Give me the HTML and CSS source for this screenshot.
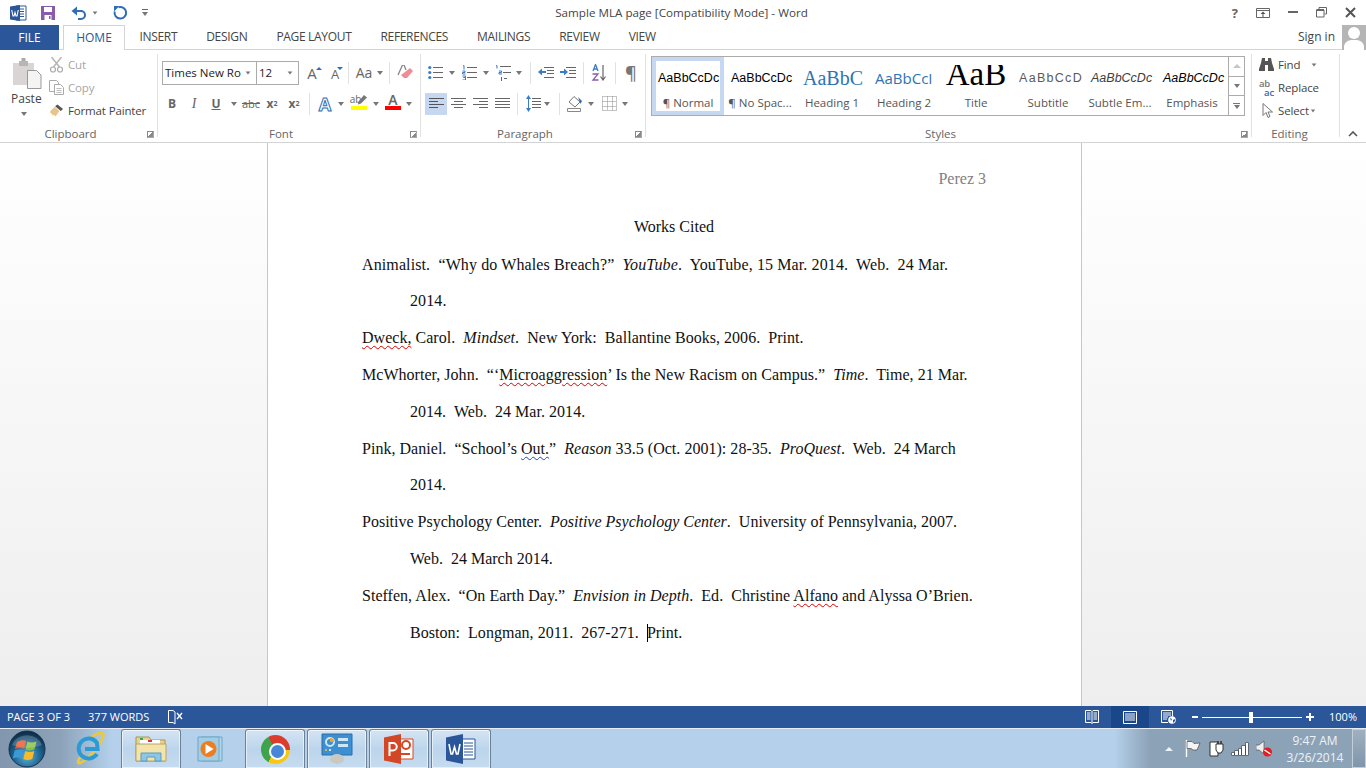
FILE: index.html
```html
<!doctype html>
<html lang="en">
<head>
	<meta charset="UTF-8">
	<title>Sample MLA page [Compatibility Mode] - Word</title>
	<link rel="stylesheet" href="styles.css">
</head>
<body>
	<div class="titlebar">
		<div class="qat">
			<svg class="qat-word" width="18" height="18" viewBox="0 0 18 18"><path d="M7 2h10v14H7z" fill="#fff" stroke="#2b579a"/><path d="M10 5h5M10 7.500h5M10 10h5M10 12.500h5" stroke="#2b579a"/><path d="M1 2.500 11 1v16L1 15.500z" fill="#2b579a"/><path d="M2.700 6 4 12h1l1-3.500L7 12h1l1.300-6" fill="none" stroke="#fff" stroke-width="1.100"/></svg>
			<svg class="qat-save" width="16" height="16" viewBox="0 0 16 16"><path d="M1 1h14v14H1z" fill="#8a5bab"/><path d="M4 2h8v5H4z" fill="#fff"/><path d="M4.500 10h7v5h-7z" fill="#fff"/><path d="M9 11h1.500v3H9z" fill="#8a5bab"/></svg>
			<svg class="qat-undo" width="16" height="14" viewBox="0 0 16 14"><path d="M3 5h7a4 4 0 0 1 0 8H7" fill="none" stroke="#2f6db5" stroke-width="2"/><path d="M6 0.500v9L0.500 5z" fill="#2f6db5"/></svg>
			<i class="caret qat-caret"></i>
			<svg class="qat-redo" width="15" height="15" viewBox="0 0 15 15"><path d="M5.500 2.300A5.800 5.800 0 1 1 1.700 6.500" fill="none" stroke="#2f6db5" stroke-width="2"/><path d="M1 1h5.500L1 6.500z" fill="#2f6db5"/></svg>
			<div class="qat-more"><b></b><i class="caret"></i></div>
		</div>
		<div class="doc-title">Sample MLA page [Compatibility Mode] - Word</div>
		<div class="win-buttons">
			<span class="help">?</span>
			<svg width="14" height="10" viewBox="0 0 14 10"><path d="M.5.500h13v9H.500zM.5 2.500h13" fill="none" stroke="#666"/><path d="M7 3.500 4.500 6h5zM6.500 6h1v3h-1z" fill="#555"/></svg>
			<svg width="10" height="3" viewBox="0 0 10 3"><path d="M0 0h10v2H0z" fill="#666"/></svg>
			<svg width="11" height="11" viewBox="0 0 11 11"><path d="M3 2V.500h7.500v6.500H8.500M.5 3h7.500v7H.5z" fill="none" stroke="#666"/><path d="M.5 3h7.500" stroke="#666" stroke-width="2"/></svg>
			<svg width="11" height="11" viewBox="0 0 11 11"><path d="M1 1l9 9M10 1l-9 9" stroke="#555" stroke-width="2"/></svg>
		</div>
	</div>

	<div class="tabs">
		<div class="tab-file">FILE</div>
		<div class="tab tab-home">HOME</div>
		<div class="tab">INSERT</div>
		<div class="tab">DESIGN</div>
		<div class="tab">PAGE LAYOUT</div>
		<div class="tab">REFERENCES</div>
		<div class="tab">MAILINGS</div>
		<div class="tab">REVIEW</div>
		<div class="tab">VIEW</div>
		<div class="signin">Sign in</div>
		<div class="avatar"><svg width="24" height="25" viewBox="0 0 24 25"><circle cx="12" cy="8" r="6" fill="#fff"/><path d="M2 25v-4q1-5 7-6h6q6 1 7 6v4z" fill="#fff"/></svg></div>
	</div>

	<div class="ribbon">
		<section class="group g-clipboard">
			<div class="group-body clip-body">
				<div class="paste">
					<svg width="30" height="31" viewBox="0 0 30 31"><path d="M1 5h21v22H1z" fill="#d9d5d5"/><path d="M7 3h9v5H7z" fill="#b9b5b5"/><path d="M9.500 0h4v3h-4z" fill="#aaa"/><path d="M15.500 12.500h9l4.500 4.500v13.500H15.500z" fill="#f4f4f4" stroke="#999"/></svg>
					<span>Paste</span>
					<i class="caret"></i>
				</div>
				<div class="clip-list">
					<div class="clip-item off"><svg width="14" height="16" viewBox="0 0 14 16"><path d="M2 0l8 10M12 0 4 10" stroke="#b5b5b5" stroke-width="1.500"/><circle cx="3.500" cy="12.500" r="2.500" fill="none" stroke="#aaa" stroke-width="1.200"/><circle cx="10.500" cy="12.500" r="2.500" fill="none" stroke="#aaa" stroke-width="1.200"/></svg>Cut</div>
					<div class="clip-item off"><svg width="15" height="15" viewBox="0 0 15 15"><path d="M.5.500h7l2 2v9h-9z" fill="#fff" stroke="#aaa"/><path d="M5.500 4.500h6l3 3v7h-9z" fill="#fff" stroke="#aaa"/><path d="M7.500 8.500h5M7.500 10.500h5M7.500 12.500h5" stroke="#bbb"/></svg>Copy</div>
					<div class="clip-item"><svg width="16" height="15" viewBox="0 0 16 15"><path d="M9 1l6 5-2.500 2-6-5z" fill="#555"/><path d="M6 3.500 11 8l-4 6-2-2-1 1-1-2-2-1 1-1-1-.5z" fill="#e9c489"/></svg>Format Painter</div>
				</div>
			</div>
			<div class="group-foot"><span></span><span>Clipboard</span><i class="launcher"></i></div>
		</section>

		<section class="group g-font">
			<div class="group-body">
				<div class="row row-top">
					<div class="combo combo-name"><span>Times New Ro</span><i class="caret"></i></div>
					<div class="combo combo-size"><span>12</span><i class="caret"></i></div>
					<div class="tool w-26"><span class="grow-a">A</span><i class="tri-up"></i></div>
					<div class="tool w-20"><span class="shrink-a">A</span><i class="tri-down"></i></div>
					<i class="sep sep-a"></i>
					<div class="tool w-24"><span class="aa">Aa</span></div>
					<div class="tool w-8"><i class="caret"></i></div>
					<i class="sep sep-b"></i>
					<div class="tool w-22">
						<svg width="16" height="15" viewBox="0 0 16 15"><path d="M8 7l5-4 3 3-6 7H7l-3-3z" fill="#ef8c98"/><path d="M1 10 5.500 0h1.500l2 5" fill="none" stroke="#888" stroke-width="1.300"/></svg>
					</div>
				</div>
				<div class="row">
					<div class="tool w-22 bold">B</div>
					<div class="tool w-22 ital">I</div>
					<div class="tool w-22 under">U</div>
					<div class="tool w-14"><i class="caret"></i></div>
					<div class="tool w-20 strike">abc</div>
					<div class="tool w-22 bold">x<sub>2</sub></div>
					<div class="tool w-22 bold">x<sup>2</sup></div>
					<i class="sep"></i>
					<div class="tool w-22 effect">A</div>
					<div class="tool w-10"><i class="caret"></i></div>
					<div class="tool w-26 marker"><span>ab</span><svg class="pen" width="10" height="10" viewBox="0 0 10 10"><path d="M7 0l3 2.500-6 6-3 1 .5-3z" fill="#777"/></svg><b></b></div>
					<div class="tool w-8"><i class="caret"></i></div>
					<div class="tool w-26 colour"><span>A</span><b></b></div>
					<div class="tool w-6"><i class="caret"></i></div>
				</div>
			</div>
			<div class="group-foot"><span></span><span>Font</span><i class="launcher"></i></div>
		</section>

		<section class="group g-para">
			<div class="group-body">
				<div class="row row-top para-top">
					<div class="tool w-22"><svg width="15" height="15" viewBox="0 0 15 15"><path d="M5 2.500h10M5 7.500h10M5 12.500h10" stroke="#666"/><circle cx="1.800" cy="2.500" r="1.600" fill="#3a7dc4"/><circle cx="1.800" cy="7.500" r="1.600" fill="#3a7dc4"/><circle cx="1.800" cy="12.500" r="1.600" fill="#3a7dc4"/></svg></div>
					<div class="tool w-12"><i class="caret"></i></div>
					<div class="tool w-22"><svg width="15" height="15" viewBox="0 0 15 15"><path d="M5 2.500h10M5 7.500h10M5 12.500h10" stroke="#666"/><path d="M1 1l1-.5v4M0.500 6h2.500v1.500h-2.500v1.500h3M.5 11h3v1.500h-2 2V15h-3" fill="none" stroke="#3a7dc4"/></svg></div>
					<div class="tool w-12"><i class="caret"></i></div>
					<div class="tool w-22"><svg width="16" height="16" viewBox="0 0 16 16"><path d="M5 1.500h11M8 7.500h8M9 13.500h3" stroke="#666"/><path d="M1 1l1-.5v3M4 6h2.500v1.500H4V9h3" fill="none" stroke="#3a7dc4"/><path d="M6 12h1v4H6z" fill="#666"/></svg></div>
					<div class="tool w-10"><i class="caret"></i></div>
					<i class="sep sep-c"></i>
					<div class="tool w-22"><svg width="16" height="12" viewBox="0 0 16 12"><path d="M6 .500h10M9 3.500h7M9 6.500h7M6 10.500h10" stroke="#666"/><path d="M0 5l4-3.500V4h4v2H4v2.500z" fill="#3a7dc4"/></svg></div>
					<div class="tool w-22"><svg width="16" height="12" viewBox="0 0 16 12"><path d="M6 .500h10M9 3.500h7M9 6.500h7M6 10.500h10" stroke="#666"/><path d="M8 5 4 1.500V4H0v2h4v2.500z" fill="#3a7dc4"/></svg></div>
					<i class="sep"></i>
					<div class="tool w-22"><svg width="16" height="17" viewBox="0 0 16 17"><path d="M2 7 4.500.500 7 7M3 5h3" fill="none" stroke="#3a7dc4" stroke-width="1.300"/><path d="M1.500 10H7L2 16h5.500" fill="none" stroke="#8a5bab" stroke-width="1.300"/><path d="M12 1v14M9.500 12.500 12 16l2.500-3.500" fill="none" stroke="#666" stroke-width="1.200"/></svg></div>
					<i class="sep sep-d"></i>
					<div class="tool w-22 pilcrow">¶</div>
				</div>
				<div class="row para-row">
					<div class="tool w-22 active"><svg width="15" height="11" viewBox="0 0 15 11"><path d="M0 .5h15M0 3.500h9M0 6.500h15M0 9.500h9" stroke="#555"/></svg></div>
					<div class="tool w-22"><svg width="15" height="11" viewBox="0 0 15 11"><path d="M0 .5h15M3 3.500h9M0 6.500h15M3 9.500h9" stroke="#666"/></svg></div>
					<div class="tool w-22"><svg width="15" height="11" viewBox="0 0 15 11"><path d="M0 .5h15M6 3.500h9M0 6.500h15M6 9.500h9" stroke="#666"/></svg></div>
					<div class="tool w-22"><svg width="15" height="11" viewBox="0 0 15 11"><path d="M0 .5h15M0 3.500h15M0 6.500h15M0 9.500h15" stroke="#666"/></svg></div>
					<i class="sep sep-e"></i>
					<div class="tool w-20"><svg width="15" height="17" viewBox="0 0 15 17"><path d="M6 3.500h9M6 6.500h9M6 9.500h9M6 12.500h9" stroke="#666"/><path d="M2.500 3v11" stroke="#3a7dc4"/><path d="M2.500 0 5 4H0zM2.500 17 5 13H0z" fill="#3a7dc4"/></svg></div>
					<div class="tool w-8"><i class="caret"></i></div>
					<i class="sep sep-f"></i>
					<div class="tool w-22"><svg width="16" height="16" viewBox="0 0 16 16"><path d="M7 .500 13 6l-5 5-6-5z" fill="#fff" stroke="#777"/><path d="M11 1l4 4-1.500 3z" fill="#2f6db5"/><path d="M.5 12.500h13v3H.500z" fill="#fff" stroke="#888"/></svg></div>
					<div class="tool w-10"><i class="caret"></i></div>
					<div class="tool w-22 borders"><svg width="15" height="15" viewBox="0 0 15 15"><path d="M.5.500h14v14H.500zM5.500.500v14M10.500.500v14M.5 5.500h14M.5 10.500h14" fill="none" stroke="#888" stroke-dasharray="1 1"/></svg></div>
					<div class="tool w-10"><i class="caret"></i></div>
				</div>
			</div>
			<div class="group-foot"><span></span><span>Paragraph</span><i class="launcher"></i></div>
		</section>

		<section class="group g-styles">
			<div class="group-body">
				<div class="gallery">
					<div class="style-item selected"><div class="prev">AaBbCcDc</div><div class="name">¶ Normal</div></div>
					<div class="style-item"><div class="prev">AaBbCcDc</div><div class="name">¶ No Spac...</div></div>
					<div class="style-item"><div class="prev prev-h1">AaBbC</div><div class="name">Heading 1</div></div>
					<div class="style-item"><div class="prev prev-h2">AaBbCcI</div><div class="name">Heading 2</div></div>
					<div class="style-item"><div class="prev prev-title">AaB</div><div class="name">Title</div></div>
					<div class="style-item"><div class="prev prev-sub">AaBbCcD</div><div class="name">Subtitle</div></div>
					<div class="style-item"><div class="prev prev-em">AaBbCcDc</div><div class="name">Subtle Em...</div></div>
					<div class="style-item"><div class="prev prev-em2">AaBbCcDc</div><div class="name">Emphasis</div></div>
					<div class="gallery-scroll">
						<div><i class="tri-up tri-grey"></i></div>
						<div><i class="caret"></i></div>
						<div class="scroll-more"><b></b><i class="caret"></i></div>
					</div>
				</div>
			</div>
			<div class="group-foot"><span></span><span>Styles</span><i class="launcher"></i></div>
		</section>

		<section class="group g-edit">
			<div class="group-body edit-body">
				<div class="edit-item"><svg width="15" height="13" viewBox="0 0 15 13"><path d="M3 0h3v3h3V0h3l1 5 2 6v2H9V7H6v6H0v-2l2-6z" fill="#555"/></svg><span>Find</span><i class="caret find-caret"></i></div>
				<div class="edit-item"><span class="abac"><em>ab</em><em>ac</em></span><span>Replace</span></div>
				<div class="edit-item item-select"><svg width="12" height="16" viewBox="0 0 12 16"><path d="M1 .500v12l3-3 2 5 2-1-2-4.500h4.500z" fill="#fff" stroke="#777"/></svg><span>Select</span><i class="caret"></i></div>
			</div>
			<div class="group-foot foot-plain"><span>Editing</span></div>
		</section>

		<div class="collapse"><svg width="10" height="6" viewBox="0 0 10 6"><path d="M1 5l4-4 4 4" fill="none" stroke="#555" stroke-width="1.600"/></svg></div>
	</div>

	<div class="workspace">
		<div class="page">
			<div class="running-head">Perez 3</div>
			<div class="works-cited">Works Cited</div>
			<p class="entry wide">Animalist.  “Why do Whales Breach?”  <em>YouTube</em>.  YouTube, 15 Mar. 2014.  Web.  24 Mar.<br>2014.</p>
			<p class="entry"><span class="spell">Dweck,</span> Carol.  <em>Mindset</em>.  New York:  Ballantine Books, 2006.  Print.</p>
			<p class="entry">McWhorter, John.  “‘<span class="spell">Microaggression</span>’ Is the New Racism on Campus.”  <em>Time</em>.  Time, 21 Mar.<br>2014.  Web.  24 Mar. 2014.</p>
			<p class="entry">Pink, Daniel.  “School’s <span class="grammar">Out.</span>”  <em>Reason</em> 33.5 (Oct. 2001): 28-35.  <em>ProQuest</em>.  Web.  24 March<br>2014.</p>
			<p class="entry snug">Positive Psychology Center.  <em>Positive Psychology Center</em>.  University of Pennsylvania, 2007.<br>Web.  24 March 2014.</p>
			<p class="entry">Steffen, Alex.  “On Earth Day.”  <em>Envision in Depth</em>.  Ed.  Christine <span class="spell">Alfano</span> and Alyssa O’Brien.<br>Boston:  Longman, 2011.  267-271.  <i class="text-cursor"></i>Print.</p>
		</div>
	</div>

	<div class="statusbar">
		<span class="stat stat-page">PAGE 3 OF 3</span>
		<span class="stat stat-words">377 WORDS</span>
		<svg class="stat-book" width="15" height="15" viewBox="0 0 15 15"><path d="M7 2 5 .5H.5v12H5l2 1.500M7 2v12" fill="none" stroke="#fff"/><path d="M9 3l5 6M14 3 9 9" stroke="#fff" stroke-width="1.300"/></svg>
		<div class="view-buttons">
			<div class="view-btn"><svg width="14" height="14" viewBox="0 0 14 14"><path d="M.5.500H6L7 1.500 8 .5h5.500v12H8L7 13.500 6 12.500H.5zM7 1.500v12M2 3h3.500M2 5h3.500M2 7h3.500M2 9h3.500M8.500 3H12M8.500 5H12M8.500 7H12M8.500 9H12" fill="none" stroke="#fff"/></svg></div>
			<div class="view-btn on"><svg width="14" height="13" viewBox="0 0 14 13"><path d="M.5.500h13v12H.500zM2 3h10M2 5h10M2 7h10M2 9h10" fill="none" stroke="#fff"/></svg></div>
			<div class="view-btn"><svg width="15" height="14" viewBox="0 0 15 14"><path d="M7 12.500H.5V.5h11v6M2 3h8M2 5h8M2 7h5M2 9h4" fill="none" stroke="#fff"/><circle cx="11" cy="10" r="3.800" fill="#fff"/><path d="M9 8l2 1-1 2zM12 10l2-1v2l-2 2z" fill="#2b579a"/></svg></div>
		</div>
		<div class="zoom-bar">
			<i class="zoom-minus"></i>
			<div class="slider"><b></b></div>
			<i class="zoom-plus"></i>
		</div>
		<span class="stat stat-zoom">100%</span>
	</div>

	<div class="taskbar">
		<svg class="orb" width="38" height="38" viewBox="0 0 38 38">
			<defs>
				<radialGradient id="orbfill" cx="50%" cy="70%" r="65%"><stop offset="0" stop-color="#5fb4d8"/><stop offset=".6" stop-color="#1c5f8e"/><stop offset="1" stop-color="#0e2f4a"/></radialGradient>
			</defs>
			<circle cx="19" cy="19" r="18" fill="url(#orbfill)" stroke="#17324a"/>
			<path d="M9 12q5-3 9-1l-2 8q-4-2-9 0z" fill="#e8562a"/>
			<path d="M19.500 11.500q4 2 9 0l-2 8q-5 2-9 0z" fill="#86c03e"/>
			<path d="M6.700 20.500q5-2 9 0l-2 8q-4-2-9 0z" fill="#3a9ad8"/>
			<path d="M17.300 21q4 2 9 0l-2 8q-5 2-9 0z" fill="#f4bc2c"/>
			<path d="M4 15a15.500 13 0 0 1 30 0q-15 6-30 0z" fill="#fff" opacity=".2"/>
		</svg>
		<div class="task-plain task-ie"><svg width="31" height="33" viewBox="0 0 31 33"><path d="M8 21c-6 8-6 11-3 10 3-1 13-8 20-20 4-7 5-10 1-10-3 0-7 2-10 4" fill="none" stroke="#f0c832" stroke-width="2.500"/><path d="M22 22a10 10 0 1 1 0-11l.5 6H10" fill="none" stroke="#2d9ad8" stroke-width="4"/></svg></div>
		<div class="task-btn task-first"><svg width="32" height="29" viewBox="0 0 32 29"><path d="M1 2h13l2 3h14v21H1z" fill="#e8d38c" stroke="#a89458"/><path d="M5 5h20v6H5z" fill="#fff"/><path d="M5 3h3v2H5z" fill="#3aa847"/><path d="M13 5h4v2h-4z" fill="#d23a2a"/><path d="M1 9h30v17H1z" fill="#f3e4ac" stroke="#b8a468"/><path d="M6 26V18h20v8h-6v-4h-8v4z" fill="#8cc8e6" stroke="#5a9cc0"/></svg></div>
		<div class="task-plain task-wmp"><svg width="30" height="26" viewBox="0 0 30 26"><path d="M4 1h21v24H4z" fill="#b3d4e6" stroke="#6fa8c8"/><path d="M1 1h21v24H1z" fill="#a3cde2" stroke="#6fa8c8"/><circle cx="11.500" cy="13" r="8" fill="#ee7d22"/><path d="M8.500 8l8 5-8 5z" fill="#fff"/></svg></div>
		<div class="task-btn task-chrome"><i class="chrome"></i></div>
		<div class="task-btn"><svg width="32" height="32" viewBox="0 0 32 32"><path d="M1 1h30v21H1z" fill="#3c8fd0" stroke="#2a6da8"/><circle cx="9" cy="9" r="4" fill="none" stroke="#cfe6f6" stroke-width="2"/><path d="M9 5a4 4 0 0 1 4 4H9z" fill="#f0a030"/><path d="M17 5h10v3H17zM17 11h10v3H17z" fill="#cfe6f6"/><circle cx="5" cy="17" r="1" fill="#f0c040"/><circle cx="9" cy="17" r="1" fill="#fff"/><ellipse cx="16" cy="26" rx="7" ry="5" fill="#c9c9c3"/></svg></div>
		<div class="task-btn"><svg width="30" height="30" viewBox="0 0 30 30"><path d="M12 5h17v20H12z" fill="#fff" stroke="#d24726"/><circle cx="22" cy="11" r="4" fill="none" stroke="#d24726" stroke-width="2"/><path d="M16 19h10v2H16z" fill="#d24726"/><path d="M0 3.500 17 0v30L0 26.500z" fill="#d24726"/><path d="M5.500 22V9h3.500a3 3 0 0 1 0 7.500H5.500" fill="none" stroke="#fff" stroke-width="2"/></svg></div>
		<div class="task-btn"><svg width="30" height="30" viewBox="0 0 30 30"><path d="M12 5h17v20H12z" fill="#fff" stroke="#2b579a"/><path d="M18 9h9M18 12h9M18 15h9M18 18h9M18 21h9" stroke="#2b579a"/><path d="M0 3.500 17 0v30L0 26.500z" fill="#2b579a"/><path d="M3 10l2 10h1.500L8.500 13l2 7H12l2-10" fill="none" stroke="#fff" stroke-width="1.600"/></svg></div>
		<div class="tray">
			<i class="tray-up"></i>
			<svg width="16" height="17" viewBox="0 0 16 17"><path d="M1.500 0v17" stroke="#fff" stroke-width="1.400"/><path d="M2 1.500h5l2 2 6-.5-3 7H8L6 8.500H2z" fill="#f4f4f4" stroke="#333" stroke-width=".6"/></svg>
			<svg width="15" height="17" viewBox="0 0 15 17"><path d="M1 2h8v14H1z" fill="#fff" stroke="#333"/><path d="M7 4h7v6l-2 3H9l-2-3z" fill="#fff" stroke="#333"/><path d="M9 1v3M12 1v3" stroke="#333" stroke-width="1.500"/></svg>
			<div class="bars"><b></b><b></b><b></b><b></b><b></b></div>
			<svg width="16" height="17" viewBox="0 0 16 17"><path d="M0 5h3l5-4v13L3 10H0z" fill="#eee" stroke="#444" stroke-width=".6"/><circle cx="11.500" cy="12" r="4.500" fill="#e31b23"/><path d="M8.500 10l6 4" stroke="#fff" stroke-width="1.500"/></svg>
			<div class="clock"><div>9:47 AM</div><div>3/26/2014</div></div>
		</div>
		<div class="show-desktop"></div>
	</div>
</body>
</html>
```

FILE: styles.css
```css
*{
	box-sizing:border-box;
}
html,body{
	margin:0;
	padding:0;
	height:100%;
	overflow:hidden;
}
body{
	width:1366px;
	height:768px;
	display:flex;
	flex-direction:column;
	font-family:"Open Sans","Noto Sans",sans-serif;
	font-size:12px;
	color:#444;
	background:#fff;
}
i{
	font-style:normal;
}

/* small shared bits */
.caret{
	display:inline-block;
	width:0;
	height:0;
	border-left:3.5px solid transparent;
	border-right:3.5px solid transparent;
	border-top:4px solid #777;
}
.tri-up{
	width:0;
	height:0;
	border-left:3px solid transparent;
	border-right:3px solid transparent;
	border-bottom:3px solid #2f6db5;
}
.tri-down{
	width:0;
	height:0;
	border-left:3px solid transparent;
	border-right:3px solid transparent;
	border-top:3px solid #2f6db5;
}
.tri-grey{
	display:inline-block;
	border-left-width:4px;
	border-right-width:4px;
	border-bottom:4px solid #c6c6c6;
}

/* title bar */
.titlebar{
	height:25px;
	flex:none;
	display:grid;
	grid-template-columns:1fr auto 1fr;
	align-items:center;
}
.qat{
	display:flex;
	align-items:center;
	padding-left:9px;
}
.qat-save{
	margin-left:13px;
}
.qat-undo{
	margin-left:15px;
}
.qat-caret{
	margin-left:5px;
	transform:scale(.8);
}
.qat-redo{
	margin-left:15px;
}
.qat-more{
	margin-left:14px;
	display:flex;
	flex-direction:column;
	align-items:center;
	gap:2px;
}
.qat-more b{
	width:6px;
	height:1px;
	background:#666;
}
.doc-title{
	margin-left:-3px;
	font-size:11.650px;
	color:#444;
}
.win-buttons{
	display:flex;
	align-items:center;
	justify-content:flex-end;
	gap:18px;
	padding-right:10px;
}
.help{
	font-weight:700;
	font-size:13px;
	color:#666;
}

/* tabs */
.tabs{
	height:25px;
	flex:none;
	display:flex;
	align-items:stretch;
	border-bottom:1px solid #d4d4d4;
}
.tab-file{
	width:59px;
	background:#2b579a;
	color:#fff;
	text-align:center;
	line-height:25px;
	margin-bottom:-1px;
	margin-right:4px;
}
.tab{
	padding:0 14.500px;
	line-height:24px;
	color:#444;
	letter-spacing:-.32px;
}
.tab-home{
	width:62px;
	padding:0;
	text-align:center;
	color:#2b579a;
	background:#fff;
	border:1px solid #d4d4d4;
	border-bottom:0;
	margin-bottom:-1px;
	line-height:24px;
	letter-spacing:0;
}
.signin{
	margin-left:auto;
	margin-right:7px;
	line-height:24px;
}
.avatar{
	width:24px;
	height:25px;
	background:#b5b5b5;
	overflow:hidden;
}

/* ribbon */
.ribbon{
	height:93px;
	flex:none;
	display:flex;
	border-bottom:1px solid #d4d4d4;
	padding-top:4px;
}
.group{
	position:relative;
	height:83px;
	border-right:1px solid #e1e1e1;
	display:flex;
	flex-direction:column;
}
.group-body{
	height:72px;
	flex:none;
}
.group-foot{
	height:16px;
	flex:none;
	display:grid;
	grid-template-columns:1fr auto 1fr;
	align-items:center;
	color:#666;
	font-size:11.500px;
	line-height:16px;
	padding-right:16px;
}
.foot-plain{
	display:block;
	text-align:center;
	padding-right:12px;
}
.launcher{
	justify-self:end;
	margin-right:-13px;
	width:7px;
	height:7px;
	border-top:1px solid #888;
	border-left:1px solid #888;
	border-bottom:1px solid #aaa;
	border-right:1px solid #aaa;
	background:linear-gradient(135deg,transparent 50%,#888 50%);
}
.g-clipboard{
	width:158px;
}
.g-font{
	width:263px;
	padding-left:3px;
}
.g-font .group-foot{
	margin-left:-3px;
}
.g-para{
	width:225px;
	padding-left:3px;
}
.g-para .group-foot{
	margin-left:-3px;
}
.g-styles{
	width:606px;
	padding-left:5px;
}
.g-styles .group-foot{
	margin-left:-5px;
}
.g-edit{
	width:88px;
}
.collapse{
	flex:1;
	display:flex;
	align-items:flex-end;
	justify-content:center;
	padding-bottom:5px;
}

.row{
	display:flex;
	align-items:center;
	height:23px;
	margin-top:8px;
}
.row-top{
	margin-top:7px;
}
.tool{
	position:relative;
	flex:none;
	height:22px;
	display:flex;
	align-items:center;
	justify-content:center;
	color:#666;
}
.w-6{width:6px;}
.w-8{width:8px;}
.w-10{width:10px;}
.w-12{width:12px;}
.w-14{width:14px;}
.w-20{width:20px;}
.w-22{width:22px;}
.w-24{width:24px;}
.w-26{width:26px;}
.sep{
	flex:none;
	width:1px;
	height:22px;
	margin:0 4px;
	background:#e1e1e1;
}
.sep-a{margin:0 3px 0 3px;}
.sep-b{margin:0 4px 0 5px;}
.sep-c{margin:0 4px 0 6px;}
.sep-d{margin:0 4px 0 5px;}
.sep-e{margin:0 5px 0 4px;}
.sep-f{margin:0 4px 0 8px;}

/* clipboard */
.clip-body{
	display:flex;
}
.paste{
	width:49px;
	padding-top:4px;
	padding-left:12px;
	display:flex;
	flex-direction:column;
	color:#444;
}
.paste span{
	margin-left:-1px;
	margin-top:1px;
	line-height:18px;
}
.paste .caret{
	margin:4px 0 0 9px;
}
.clip-list{
	margin-top:-1px;
	font-size:11.500px;
	letter-spacing:-.15px;
}
.clip-item{
	height:23px;
	display:flex;
	align-items:center;
	gap:4px;
	color:#444;
}
.clip-item svg{
	flex:none;
	width:15px;
}
.clip-item.off{
	color:#a6a6a6;
}

/* font */
.combo{
	height:24px;
	flex:none;
	display:flex;
	align-items:center;
	justify-content:space-between;
	border:1px solid #ababab;
	padding:0 5px 0 2px;
	font-size:11.500px;
	color:#222;
}
.combo-name{
	width:95px;
	margin-left:1px;
}
.combo-size{
	width:43px;
	margin-left:-1px;
}
.combo .caret{
	transform:scale(.8);
}
.grow-a{
	font-size:15px;
	color:#666;
}
.shrink-a{
	font-size:13px;
	color:#666;
	margin-top:2px;
}
.tool .tri-up{
	position:absolute;
	top:5px;
	right:3px;
}
.tool .tri-down{
	position:absolute;
	top:5px;
	right:2px;
}
.aa{
	font-size:14px;
	color:#666;
}
.bold{
	font-weight:700;
	font-size:12px;
}
.bold sub,.bold sup{
	font-size:7px;
	color:#2f6db5;
	line-height:0;
}
.bold sup{
	color:#666;
}
.ital{
	font-family:"Liberation Serif",serif;
	font-style:italic;
	font-size:14px;
}
.under{
	font-weight:700;
	text-decoration:underline;
}
.strike{
	font-size:11px;
	text-decoration:line-through;
}
.effect{
	font-weight:700;
	font-size:18px;
	color:#fff;
	-webkit-text-stroke:1px #2f6db5;
}
.marker,.colour{
	flex-direction:column;
	justify-content:flex-start;
	line-height:13px;
}
.marker span{
	font-size:10px;
	margin-right:7px;
	color:#666;
}
.pen{
	position:absolute;
	top:2px;
	right:5px;
}
.colour span{
	font-size:14px;
	font-weight:600;
}
.marker b,.colour b{
	width:16px;
	height:4px;
	background:#ffff00;
}
.colour b{
	background:#ff0000;
}

/* paragraph */
.para-top .tool{
	height:23px;
}
.pilcrow{
	font-size:18px;
	font-weight:600;
	color:#777;
}
.para-row{
	margin-left:1px;
}
.tool.active{
	background:#c5d7f1;
}
.borders{
	margin-left:2px;
}

/* styles gallery */
.gallery{
	height:60px;
	margin-top:2px;
	width:594px;
	display:flex;
	border:1px solid #ababab;
}
.style-item{
	width:72px;
	flex:none;
	overflow:hidden;
	text-align:center;
	padding-top:2px;
	border:0;
}
.style-item.selected{
	width:72px;
	border:4px solid #c5d7f1;
	padding-top:0;
}
.prev{
	height:37px;
	line-height:39px;
	padding:0 7px;
	overflow:hidden;
	white-space:nowrap;
	font-family:"Liberation Sans",sans-serif;
	font-size:12.500px;
	color:#000;
	text-align:left;
}
.selected .prev{
	height:35px;
	line-height:35px;
	padding:0 2px;
}
.name{
	font-size:11.500px;
	color:#555;
	white-space:nowrap;
	line-height:14px;
}
.prev-h1{
	font-family:"Liberation Serif",serif;
	font-size:20px;
	color:#2e74b5;
}
.prev-h2{
	font-family:"Open Sans",sans-serif;
	font-size:15px;
	color:#2e74b5;
}
.prev-title{
	font-family:"Liberation Serif",serif;
	font-size:33px;
	line-height:18px;
	height:21px;
	margin-top:6px;
	margin-bottom:10px;
	padding:0;
	text-align:center;
}
.prev-sub{
	color:#5a5a5a;
	letter-spacing:1.300px;
}
.prev-em{
	font-style:italic;
	color:#404040;
}
.prev-em2{
	font-style:italic;
}
.gallery-scroll{
	flex:1;
	display:flex;
	flex-direction:column;
	border-left:1px solid #ababab;
}
.gallery-scroll div{
	flex:1;
	display:flex;
	flex-direction:column;
	align-items:center;
	justify-content:center;
	border-bottom:1px solid #ababab;
}
.gallery-scroll div:last-child{
	border-bottom:0;
}
.scroll-more{
	gap:1px;
}
.scroll-more b{
	width:7px;
	height:1px;
	background:#777;
}

/* editing */
.edit-body{
	margin-top:-1px;
	margin-bottom:1px;
	padding-left:7px;
	font-size:11.500px;
	letter-spacing:-.15px;
}
.edit-item{
	height:23px;
	display:flex;
	align-items:center;
	gap:4px;
	color:#444;
}
.find-caret{
	margin-left:7px;
	transform:scale(.8);
}
.abac{
	display:flex;
	flex-direction:column;
	width:15px;
	font-size:9.500px;
	line-height:9px;
	font-weight:600;
}
.abac em{
	font-style:normal;
	color:#777;
}
.abac em + em{
	color:#2f6db5;
	text-align:right;
}
.item-select{
	padding-left:3px;
	gap:4px;
}
.item-select .caret{
	margin-left:-3px;
	transform:scale(.7);
}

/* document */
.workspace{
	flex:1;
	min-height:0;
	display:flex;
	justify-content:center;
	overflow:hidden;
	padding-right:17px;
	background:linear-gradient(#fff,#eee);
}
.page{
	width:815px;
	flex:none;
	background:#fff;
	border-left:1px solid #c6c6c6;
	border-right:1px solid #c6c6c6;
	padding:26px 95px 0 94px;
	font-family:"Liberation Serif",serif;
	font-size:16px;
	color:#111;
}
.running-head{
	text-align:right;
	color:#808080;
	line-height:20px;
}
.works-cited{
	text-align:center;
	line-height:37px;
	margin-top:19px;
	margin-bottom:1.600px;
}
.entry{
	margin:0;
	padding-left:48px;
	text-indent:-48px;
	line-height:36.800px;
	white-space:pre;
	letter-spacing:.03px;
}
.wide{
	letter-spacing:.11px;
}
.snug{
	letter-spacing:0;
}
.spell{
	text-decoration:underline wavy #e00000;
	text-decoration-thickness:1px;
	text-underline-offset:2px;
}
.grammar{
	text-decoration:underline wavy #2040d0;
	text-decoration-thickness:1px;
	text-underline-offset:2px;
}
.text-cursor{
	display:inline-block;
	width:1px;
	height:18px;
	margin-right:-1px;
	background:#000;
	vertical-align:-4px;
}

/* status bar */
.statusbar{
	height:22px;
	flex:none;
	display:flex;
	align-items:center;
	background:#2b579a;
	color:#fff;
}
.stat{
	font-size:11px;
	line-height:22px;
}
.stat-page{
	margin-left:7px;
}
.stat-words{
	margin-left:18px;
}
.stat-book{
	margin-left:19px;
}
.view-buttons{
	margin-left:auto;
	display:flex;
	align-items:center;
	height:22px;
}
.view-btn{
	width:38px;
	height:22px;
	display:flex;
	align-items:center;
	justify-content:center;
}
.view-btn.on{
	background:#19478a;
}
.zoom-bar{
	display:flex;
	align-items:center;
	margin-left:5px;
	margin-right:15px;
}
.zoom-minus{
	width:6px;
	height:2px;
	background:#fff;
}
.zoom-plus{
	position:relative;
	width:8px;
	height:2px;
	background:#fff;
}
.zoom-plus:after{
	content:"";
	position:absolute;
	left:3px;
	top:-3px;
	width:2px;
	height:8px;
	background:#fff;
}
.slider{
	position:relative;
	width:100px;
	height:1px;
	margin:0 4px;
	background:#fff;
}
.slider b{
	position:absolute;
	left:47px;
	top:-5px;
	width:4px;
	height:11px;
	background:#fff;
}
.stat-zoom{
	margin-right:9px;
}

/* taskbar */
.taskbar{
	height:40px;
	flex:none;
	display:flex;
	align-items:center;
	position:relative;
	background:linear-gradient(90deg,#8297ad 0,#8ba2b9 60px,#b4d0ea 112px,#b4d0ea 1115px,#8ca2b7 1150px,#8ca2b7 100%);
	border-top:1px solid #e6edf4;
}
.orb{
	flex:none;
	margin-left:8px;
}
.task-plain{
	flex:none;
	display:flex;
	align-items:center;
	justify-content:center;
}
.task-ie{
	width:31px;
	margin-left:29px;
}
.task-wmp{
	width:30px;
	margin-right:18px;
}
.task-btn{
	flex:none;
	width:60px;
	height:39px;
	margin-right:2px;
	display:flex;
	align-items:center;
	justify-content:center;
	border:1px solid #6d8095;
	border-bottom:0;
	border-radius:3px 3px 0 0;
	background:linear-gradient(#d4e4f3,#bcd5ec 50%,#c6dbef);
	box-shadow:inset 0 0 0 1px rgba(255,255,255,.6);
}
.task-first{
	margin-left:15px;
	margin-right:16px;
}
.chrome{
	position:relative;
	width:29px;
	height:29px;
	border-radius:50%;
	background:conic-gradient(from -30deg,#dc3c2e 0 120deg,#f6c813 120deg 240deg,#3da34d 240deg 360deg);
}
.chrome:after{
	content:"";
	position:absolute;
	left:8px;
	top:8px;
	width:13px;
	height:13px;
	border-radius:50%;
	background:#4a86d8;
	border:2px solid #fff;
}
.tray{
	margin-left:auto;
	display:flex;
	align-items:center;
	gap:8px;
}
.tray-up{
	width:0;
	height:0;
	border-left:4px solid transparent;
	border-right:4px solid transparent;
	border-bottom:4px solid #eef3f8;
	margin-right:4px;
}
.bars{
	display:flex;
	align-items:flex-end;
	gap:1px;
	height:12px;
}
.bars b{
	width:2.400px;
	background:#fff;
	box-shadow:0 0 0 .5px #333;
}
.bars b:nth-child(1){height:2px;}
.bars b:nth-child(2){height:4px;}
.bars b:nth-child(3){height:6px;}
.bars b:nth-child(4){height:9px;}
.bars b:nth-child(5){height:12px;}
.clock{
	width:70px;
	text-align:center;
	color:#eef3f8;
	line-height:17px;
	font-size:12px;
}
.show-desktop{
	width:14px;
	height:39px;
	margin-left:2px;
	border:1px solid #c4ced8;
	background:linear-gradient(#9fb0c0,#7f96ab);
}
```
